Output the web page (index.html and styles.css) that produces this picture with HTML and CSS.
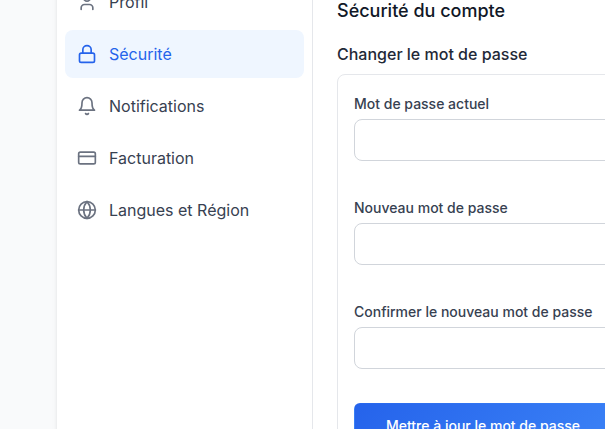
FILE: index.html
```html
<!DOCTYPE html>
<html lang="fr">
<head>
<meta charset="utf-8">
<title>Sécurité du compte</title>
<link rel="stylesheet" href="styles.css">
</head>
<body>
<div class="panel">
  <nav class="sidebar">
    <a class="item"><svg class="icon" viewBox="0 0 24 24"><path d="M19 21v-2a4 4 0 0 0-4-4H9a4 4 0 0 0-4 4v2"/><circle cx="12" cy="7" r="4"/></svg>Profil</a>
    <a class="item active"><svg class="icon" viewBox="0 0 24 24"><rect x="3" y="11" width="18" height="11" rx="2"/><path d="M7 11V7a5 5 0 0 1 10 0v4"/></svg>Sécurité</a>
    <a class="item"><svg class="icon" viewBox="0 0 24 24"><path d="M6 8a6 6 0 0 1 12 0c0 7 3 9 3 9H3s3-2 3-9"/><path d="M10.3 21a1.94 1.94 0 0 0 3.4 0"/></svg>Notifications</a>
    <a class="item"><svg class="icon" viewBox="0 0 24 24"><rect x="2" y="5" width="20" height="14" rx="2"/><path d="M2 10h20"/></svg>Facturation</a>
    <a class="item"><svg class="icon" viewBox="0 0 24 24"><circle cx="12" cy="12" r="10"/><path d="M12 2a14.5 14.5 0 0 0 0 20 14.5 14.5 0 0 0 0-20"/><path d="M2 12h20"/></svg>Langues et Région</a>
  </nav>
  <main class="content">
    <h2 class="title">Sécurité du compte</h2>
    <h3 class="subtitle">Changer le mot de passe</h3>
    <form class="card">
      <div class="field"><label class="label" for="current">Mot de passe actuel</label><input class="input" id="current" type="password"></div>
      <div class="field"><label class="label" for="new">Nouveau mot de passe</label><input class="input" id="new" type="password"></div>
      <div class="field"><label class="label" for="confirm">Confirmer le nouveau mot de passe</label><input class="input" id="confirm" type="password"></div>
      <button class="button" type="button">Mettre à jour le mot de passe</button>
    </form>
  </main>
</div>
</body>
</html>
```
FILE: styles.css
```css
* {
  box-sizing: border-box;
}

body {
  margin: 0;
  height: 429px;
  overflow: hidden;
  background: #f9fafb;
  font: 16px/24px Inter, "Liberation Sans", sans-serif;
  color: #374151;
}

.panel {
  display: flex;
  width: 900px;
  height: 600px;
  margin: -30px 0 0 57px;
  background: #fff;
  box-shadow: 0 4px 6px -1px rgba(0, 0, 0, 0.1), 0 2px 4px -2px rgba(0, 0, 0, 0.1);
}

.sidebar {
  display: flex;
  flex: none;
  flex-direction: column;
  gap: 4px;
  width: 256px;
  padding: 8px;
  border-right: 1px solid #e5e7eb;
}

.item {
  display: flex;
  align-items: center;
  gap: 12px;
  height: 48px;
  padding: 0 12px;
  border-radius: 8px;
}

.active {
  background: #eff6ff;
  color: #2563eb;
}

.icon {
  width: 20px;
  height: 20px;
  fill: none;
  stroke: #6b7280;
  stroke-width: 2;
  stroke-linecap: round;
  stroke-linejoin: round;
}

.active .icon {
  stroke: #2563eb;
}

.content {
  flex: 1;
  padding: 27px 24px;
}

.title {
  margin: 0 0 17px;
  font-size: 18px;
  font-weight: 500;
  line-height: 28px;
  color: #111827;
}

.subtitle {
  margin: 0 0 8px;
  font-size: 16px;
  font-weight: 500;
  color: #1f2937;
}

.card {
  padding: 16px;
  border: 1px solid #e5e7eb;
  border-radius: 8px;
}

.field {
  margin-bottom: 34px;
}

.label {
  display: block;
  padding-top: 3px;
  margin-bottom: 5px;
  font-size: 14px;
  font-weight: 500;
  line-height: 20px;
}

.input {
  display: block;
  width: 100%;
  height: 42px;
  border: 1px solid #d1d5db;
  border-radius: 8px;
  background: #fff;
}

.button {
  width: 258px;
  height: 46px;
  padding: 0;
  border: 1px solid transparent;
  border-radius: 6px;
  background: linear-gradient(135deg, #2563eb, #3b82f6);
  color: #fff;
  font: 500 14px/20px Inter, "Liberation Sans", sans-serif;
}
```
